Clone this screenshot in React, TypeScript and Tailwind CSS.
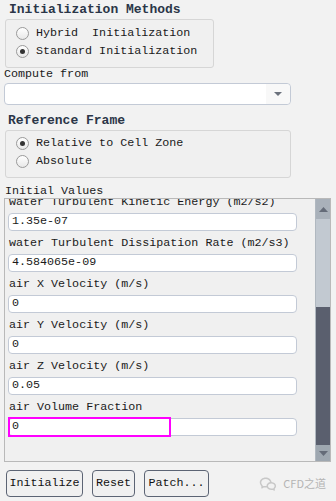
import { RiWechatLine } from 'react-icons/ri'

const FIELDS = [
  { label: 'water Turbulent Kinetic Energy (m2/s2)', value: '1.35e-07' },
  { label: 'water Turbulent Dissipation Rate (m2/s3)', value: '4.584065e-09' },
  { label: 'air X Velocity (m/s)', value: '0' },
  { label: 'air Y Velocity (m/s)', value: '0' },
  { label: 'air Z Velocity (m/s)', value: '0.05' },
  { label: 'air Volume Fraction', value: '0', marked: true },
]

function Radio({ label, checked }: { label: string; checked?: boolean }) {
  return (
    <div className="flex h-[18px] items-center">
      <span className="ml-[10px] flex h-[13px] w-[13px] items-center justify-center rounded-full border border-[#9a9a9a] bg-[linear-gradient(#ffffff,#e8e8e8)]">
        {checked && <span className="h-[5px] w-[5px] rounded-full bg-[#333]" />}
      </span>
      <span className="ml-[7px] whitespace-pre leading-[14px]">{label}</span>
    </div>
  )
}

function Button({ label, width }: { label: string; width: string }) {
  return (
    <button
      type="button"
      className={`flex h-[27px] items-center justify-center rounded-[4px] border border-[#5c6474] bg-[#f0f0f0] text-[#111] ${width}`}
    >
      {label}
    </button>
  )
}

export default function App() {
  return (
    <div className="relative h-[501px] w-[336px] overflow-hidden bg-[#f2f2f2] font-['Liberation_Mono',monospace] text-[11.7px] text-[#1a1a1a]">
      <div className="h-[19px] pl-[9px] pt-[3px] text-[13px] font-bold leading-[14px] text-[#2b3648]">
        Initialization Methods
      </div>
      <div className="ml-[5px] h-[49px] w-[209px] rounded-[3px] border border-[#d6d6d6] bg-[#f0f0f0] pt-[4px]">
        <Radio label="Hybrid  Initialization" />
        <Radio label="Standard Initialization" checked />
      </div>

      <div className="h-[15px] pl-[4px] leading-[13px]">Compute from</div>
      <div className="ml-[4px] flex h-[22px] w-[287px] items-center justify-end rounded-[4px] border border-[#c3cad6] bg-white">
        <div className="flex h-full w-[24px] items-center justify-center rounded-r-[4px] bg-[#f8f8f8]">
          <svg width="8" height="4" viewBox="0 0 8 4">
            <path d="M0 0h8L4 4z" fill="#6b717c" />
          </svg>
        </div>
      </div>

      <div className="h-[25px] pl-[8px] pt-[9px] text-[13px] font-bold leading-[14px] text-[#2b3648]">
        Reference Frame
      </div>
      <div className="ml-[5px] h-[48px] w-[286px] rounded-[3px] border border-[#d6d6d6] bg-[#f0f0f0] pt-[3px]">
        <Radio label="Relative to Cell Zone" checked />
        <Radio label="Absolute" />
      </div>

      <div className="h-[20px] pl-[5px] pt-[6px] leading-[14px]">Initial Values</div>
      <div className="ml-[4px] flex h-[264px] w-[327px] border border-[#b9b9b9] bg-[#f0f0f0]">
        <div className="flex-1 overflow-hidden">
          <div className="-mt-[9px]">
            {FIELDS.map((f) => (
              <div key={f.label}>
                <div className="h-[23px] whitespace-nowrap pl-[4px] pt-[5px] leading-[14px]">{f.label}</div>
                <div className="relative ml-[3px] flex h-[18px] w-[289px] items-center rounded-[4px] border border-[#c3cad6] bg-white pl-[3px]">
                  {f.value}
                  {f.marked && (
                    <div className="absolute -left-[1px] -top-[2px] h-[20px] w-[163px] border-2 border-[#ff00ff]" />
                  )}
                </div>
              </div>
            ))}
          </div>
        </div>
        <div className="flex w-[15px] flex-col border-l border-[#b0b8c0] bg-[#c2c9d1]">
          <div className="flex h-[20px] items-center justify-center bg-[#a9b1ba]">
            <svg width="9" height="5" viewBox="0 0 9 5">
              <path d="M4.5 0L9 5H0z" fill="#646b78" />
            </svg>
          </div>
          <div className="h-[88px]" />
          <div className="flex-1 bg-[#5a5f6e]" />
          <div className="flex h-[16px] items-center justify-center bg-[#9ea7b0]">
            <svg width="9" height="5" viewBox="0 0 9 5">
              <path d="M0 0h9L4.5 5z" fill="#646b78" />
            </svg>
          </div>
        </div>
      </div>

      <div className="mt-[8px] flex items-center gap-[9px] pl-[6px]">
        <Button label="Initialize" width="w-[77px]" />
        <Button label="Reset" width="w-[43px]" />
        <Button label="Patch..." width="w-[65px]" />
        <div className="ml-auto mr-[10px] flex items-center gap-[6px] font-['Noto_Sans_CJK_SC',sans-serif] text-[11px] text-[#b4b4b4]">
          <RiWechatLine className="h-[18px] w-[18px] text-[#c8c8c8]" />
          <span>CFD之道</span>
        </div>
      </div>
    </div>
  )
}
